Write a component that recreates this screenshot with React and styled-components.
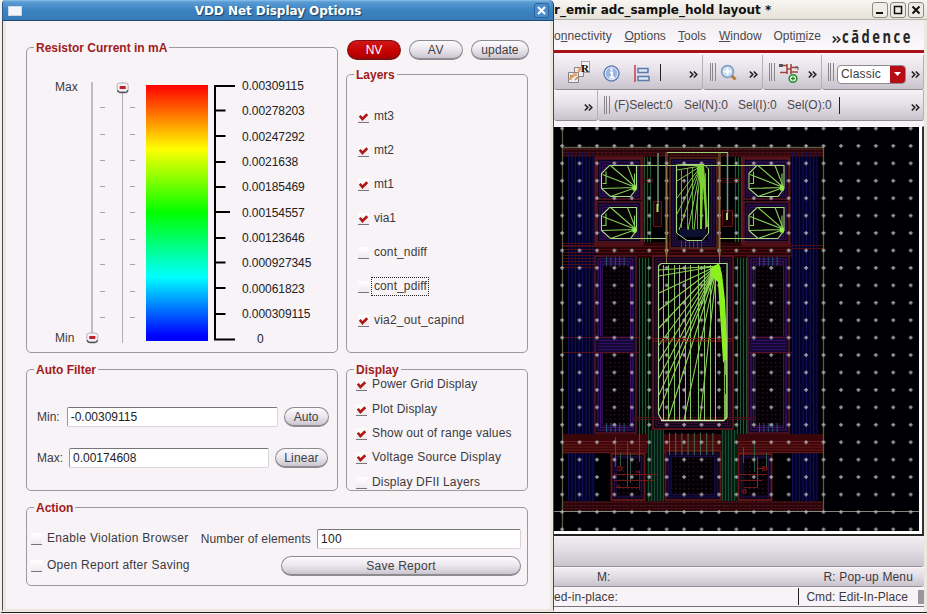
import React from "react";
import styled, { createGlobalStyle } from "styled-components";

const Global = createGlobalStyle`
  * { box-sizing: border-box; }
  html, body { margin: 0; padding: 0; background: #fff; }
  body { width: 927px; height: 614px; overflow: hidden; font: 12px/14px "Liberation Sans", Arial, sans-serif; color: #333; }
  svg { display: block; flex: none; }
`;

const Desktop = styled.div`
  display: flex;
  width: 927px;
  height: 614px;
  background: #f4f2f0;
  overflow: hidden;
`;

/* ---------- shared text ---------- */
const Text = styled.span`
  white-space: nowrap;
  flex: none;
  letter-spacing: ${(p) => p.$ls || 0}px;
  color: ${(p) => p.$color || "#3c3a3e"};
`;

/* ---------- dialog ---------- */
const Dialog = styled.div`
  flex: none;
  width: 554px;
  height: 613px;
  display: flex;
  flex-direction: column;
  border-left: 2px solid #f3f1ee;
  border-bottom: 1px solid #222;
`;

const DialogTitle = styled.div`
  flex: none;
  height: 21px;
  display: flex;
  align-items: center;
  justify-content: space-between;
  padding: 1px 4px 0 5px;
  border-bottom: 1px solid #1c4a78;
  border-right: 1px solid #1f3a5c;
  border-left: 1px solid #2b5b8c;
  border-radius: 4px 5px 0 0;
  background: linear-gradient(#8ac0ea 0, #5b9bd3 2px, #3c83c2 10px, #3a7cb8 18px);
  color: #fff;
  font: bold 12px/18px "DejaVu Sans", sans-serif;
  letter-spacing: -0.05px;
  text-shadow: 1px 1px 1px #1d3f63;
`;

const WindowGlyph = styled.span`
  width: 14px;
  height: 10px;
  background: #f5f5fa;
  border: 1px solid #c8d8ea;
`;

const CloseBox = styled.span`
  width: 15px;
  height: 15px;
  border: 1px solid #2a629b;
  border-radius: 3px;
  background: #4a8dcc;
  display: grid;
  place-items: center;
`;

const DialogBody = styled.div`
  flex: 1;
  display: flex;
  flex-direction: column;
  gap: 16px;
  padding: 19px 22px 0 23px;
  background: #f7f3f7;
  border-left: 1px solid #4a4844;
  border-right: 1px solid #4a4844;
  border-bottom: 3px solid #ece8e0;
  box-shadow: inset 3px 0 0 #ece8e0, inset -3px 0 0 #ece8e0;
`;

const Columns = styled.div`
  display: flex;
  gap: 8px;
  height: ${(p) => p.$h}px;
  align-items: flex-end;
`;

const Group = styled.section`
  flex: none;
  min-width: 0;
  width: ${(p) => p.$w}px;
  height: ${(p) => p.$h}px;
  border: 1px solid #9c999d;
  border-radius: 5px;
`;

const GroupTitle = styled.div`
  width: max-content;
  height: 14px;
  margin: -7px 0 0 7px;
  padding: 0 2px;
  background: #f7f3f7;
  color: #a01c20;
  font-weight: bold;
`;

const RightColumn = styled.div`
  display: flex;
  flex-direction: column;
  gap: 14px;
`;

const ButtonRow = styled.div`
  display: flex;
  gap: 8px;
  padding-left: 1px;
`;

const Button = styled.button`
  flex: none;
  width: ${(p) => p.$w}px;
  height: 20px;
  padding: 2px 0 1px;
  border-radius: 10px;
  border: 1px solid ${(p) => (p.$on ? "#7c1010" : "#8d8a90")};
  border-bottom-width: 2px;
  background: ${(p) => (p.$on ? "linear-gradient(#d01818, #c60000 60%, #b00000)" : "linear-gradient(#fdfbfe 0, #ebe6ed 50%, #cbc5d0 100%)")};
  color: ${(p) => (p.$on ? "#fff" : "#403e42")};
  font: 12px/14px "Liberation Sans", Arial, sans-serif;
  letter-spacing: ${(p) => p.$ls || 0}px;
`;

/* ---------- resistor current panel ---------- */
const ScaleRow = styled.div`
  display: flex;
  margin-top: 23px;
  height: 266px;
`;

const EndLabels = styled.div`
  width: 56px;
  height: 267px;
  padding: 2px 0 0 28px;
  display: flex;
  flex-direction: column;
  justify-content: space-between;
`;

const Spectrum = styled.div`
  width: 62px;
  height: 256px;
  margin: 7px 6px 0 6px;
  background: linear-gradient(#f00 0, #ff0 25%, #0f0 50%, #0ff 75%, #00f 98%);
`;

const Values = styled.div`
  display: flex;
  flex-direction: column;
  margin: 1px 0 0 7px;
`;

const Value = styled.div`
  flex: none;
  height: 25.35px;
  line-height: 15px;
  color: #222;
  letter-spacing: -0.07px;
  padding-left: ${(p) => (p.$zero ? 15 : 0)}px;
`;

/* ---------- checks ---------- */
const CheckList = styled.div`
  display: flex;
  flex-direction: column;
  padding: ${(p) => p.$pad};
  margin-top: ${(p) => p.$mt || 0}px;
`;

const CheckRow = styled.label`
  display: flex;
  flex: none;
  align-items: center;
  gap: ${(p) => (p.$focus ? 2 : 5)}px;
  height: ${(p) => p.$h}px;
`;

const FocusFrame = styled.span`
  border: 1px dotted #222;
  padding: 1px 1px 2px 2px;
  height: 19px;
`;

const Box = styled.span`
  flex: none;
  width: 11px;
  height: 12px;
  margin-top: 2px;
  background: linear-gradient(#fff, #eeeaf0);
  border-bottom: 1px solid #77747a;
`;

function Check({ on, label, ls, h, focus }) {
  const text = <Text $ls={ls}>{label}</Text>;
  return (
    <CheckRow $h={h} $focus={focus}>
      <Box>
        {on && (
          <svg width="11" height="11" viewBox="0 0 11 11">
            <path d="M1.800 4.800 L4.400 8 L9.300 3.200" fill="none" stroke="#b01818" strokeWidth="2.600" />
          </svg>
        )}
      </Box>
      {focus ? <FocusFrame>{text}</FocusFrame> : text}
    </CheckRow>
  );
}

/* ---------- fields ---------- */
const FieldRow = styled.div`
  display: flex;
  align-items: center;
  height: 20px;
  margin: ${(p) => p.$m};
`;

const Input = styled.div`
  flex: none;
  width: ${(p) => p.$w}px;
  height: 20px;
  margin: 0 ${(p) => p.$mr || 0}px 0 ${(p) => p.$ml || 0}px;
  padding: 2px 3px;
  background: #fff;
  border: 1px solid #d8d4da;
  border-top-color: #77747a;
  border-left-color: #9a979c;
  border-radius: 2px;
  color: #222;
  letter-spacing: ${(p) => p.$ls || 0}px;
`;

const ActionColumns = styled.div`
  display: flex;
  justify-content: space-between;
  padding: 13px 6px 0 4px;
`;

const ActionRight = styled.div`
  display: flex;
  flex-direction: column;
  align-items: flex-end;
  gap: 7px;
  padding-top: 1px;
`;

const Line = styled.div`
  display: flex;
  align-items: center;
`;

/* ---------- layout window ---------- */
const Main = styled.div`
  flex: none;
  width: 373px;
  height: 613px;
  display: flex;
  flex-direction: column;
  background: #ece8e0;
  border-bottom: 1px solid #222;
`;

const MainTitle = styled.div`
  flex: none;
  height: 20px;
  display: flex;
  align-items: center;
  justify-content: space-between;
  padding: 0 3px 0 0;
  background: linear-gradient(#f8f6f2, #e6e1d8);
  border-bottom: 1px solid #b8b4aa;
  color: #111;
  font: bold 12px/18px "DejaVu Sans", sans-serif;
  letter-spacing: -0.01px;
  white-space: nowrap;
`;

const WindowButtons = styled.div`
  display: flex;
  gap: 2px;
`;

const WindowButton = styled.span`
  width: 16px;
  height: 16px;
  border: 1px solid #8d897f;
  border-radius: 3px;
  background: #efece5;
  display: grid;
  place-items: center;
`;

const Content = styled.div`
  width: 370px;
  flex: 1;
  display: flex;
  flex-direction: column;
  background: #f7f3f7;
`;

const MenuBar = styled.div`
  height: 30px;
  display: flex;
  align-items: center;
  padding-top: 1px;
  background: linear-gradient(#f1edf1, #fbf9fb);
  white-space: nowrap;
`;

const MenuItem = styled.span`
  width: ${(p) => p.$w}px;
  flex: none;
  letter-spacing: ${(p) => p.$ls || 0}px;
  color: #4a484c;
`;

const MenuMore = styled.span`
  flex: none;
  padding-top: 8px;
  margin-left: -1px;
`;

const Brand = styled.span`
  font: bold 17px/18px "Open Sans", "Noto Sans", sans-serif;
  letter-spacing: 3.3px;
  color: #262626;
  padding-top: 3px;
  margin-left: 1px;
  width: 74px;
  transform: scaleX(0.765);
  transform-origin: left;
`;

const RedRule = styled.div`
  height: 3px;
  flex: none;
  background: #a81218;
  margin-bottom: 2px;
`;

const ToolRow = styled.div`
  display: flex;
  flex: none;
  height: ${(p) => p.$h}px;
`;

const ToolSegment = styled.div`
  flex: none;
  width: ${(p) => p.$w}px;
  display: flex;
  align-items: center;
  padding: ${(p) => p.$pad || "0"};
  background: linear-gradient(#f6f2f7 0, #e7e2e9 45%, #c8c3cc 100%);
  border-bottom: 1px solid #8f8b93;
  border-right: 1px solid #b5b0b8;
  border-radius: 0 0 3px 3px;
`;

const Grip = styled.span`
  flex: none;
  width: 6px;
  height: 18px;
  border-left: 1px solid #8a868e;
  border-right: 1px solid #8a868e;
  background: linear-gradient(90deg, transparent 1px, #8a868e 1px, #8a868e 2px, transparent 2px);
  margin-right: ${(p) => p.$mr || 0}px;
`;

const Bar = styled.span`
  flex: none;
  width: 1px;
  height: 17px;
  background: #222;
  margin-left: ${(p) => p.$ml || 0}px;
`;

const Push = styled.span`
  flex: 1;
`;

const Spacer = styled.span`
  flex: none;
  width: ${(p) => p.$w}px;
`;

const Select = styled.div`
  flex: none;
  width: 69px;
  height: 19px;
  display: flex;
  align-items: center;
  justify-content: space-between;
  padding-left: 3px;
  margin-top: 4px;
  border: 1px solid #8d8a90;
  border-radius: 4px;
  background: #fff;
  overflow: hidden;
`;

const SelectArrow = styled.span`
  width: 15px;
  height: 18px;
  background: #b80c14;
  display: grid;
  place-items: center;
`;

const MoreBox = styled.span`
  flex: none;
  padding-top: 4px;
`;

const CanvasFrame = styled.div`
  flex: none;
  margin-top: 5px;
  width: 370px;
  height: 410px;
  background: #fff;
  border-right: 2px solid #333;
  border-bottom: 2px solid #222;
  border-top: 1px solid #fff;
`;

const PromptPanel = styled.div`
  flex: none;
  height: ${(p) => p.$h}px;
  display: flex;
  align-items: center;
  justify-content: space-between;
  padding: 0 11px 0 43px;
  margin-top: 1px;
  background: linear-gradient(#f1edf2, #e3dee5 45%, #c9c4cc);
  border-bottom: 1px solid #96929a;
  border-radius: 0 0 3px 0;
`;

const StatusBar = styled.div`
  flex: none;
  height: 20px;
  display: flex;
  align-items: center;
  border-bottom: 1px solid #77747a;
`;

const SizeGrip = styled.span`
  width: 6px;
  height: 14px;
  background: #9a979c;
  margin-left: 10px;
`;

const More = () => (
  <MoreBox>
    <svg width="9" height="9" viewBox="0 0 9 9">
      <path d="M.8 1.500 L3.800 4.500 L.8 7.500 M4.800 1.500 L7.800 4.500 L4.800 7.500" fill="none" stroke="#222" strokeWidth="1.600" />
    </svg>
  </MoreBox>
);

/* ---------- sliders and tick scale ---------- */
const Handle = ({ x, y }) => (
  <g transform={`translate(${x} ${y})`}>
    <rect x="-5.5" y="0" width="11" height="9" rx="2.5" fill="#f3eff4" stroke="#b5b1b7" />
    <path d="M-5 7 Q-5 9.5 -2 9.5 H2 Q5 9.5 5 7" fill="none" stroke="#55525a" strokeWidth="1.3" />
    <rect x="-3" y="3" width="6" height="3" fill="#c02028" />
  </g>
);

const tickYs = [107.5, 134.5, 160.5, 186.5, 212.5, 239.5, 264.5, 291.5, 317.5];
function Sliders() {
  return (
    <svg width="57" height="266" viewBox="83 78 57 266">
      <path d="M92 82V334" stroke="#c0bcc2" strokeWidth="2" />
      <path d="M122.5 82V343" stroke="#b0acb2" />
      <path d={tickYs.map((y) => `M100 ${y}h5M130 ${y}h5`).join("")} stroke="#a5a2a8" />
      <Handle x={92.3} y={333} />
      <Handle x={122.7} y={83} />
    </svg>
  );
}

function Axis() {
  const ticks = [110.5, 136, 162, 187, 238, 262.5, 288, 314];
  return (
    <svg width="21" height="266" viewBox="213 78 21 266">
      <path d="M234 86H214V339.500H234M214 212H229" fill="none" stroke="#000" strokeWidth="2" />
      <path d={ticks.map((y) => `M214 ${y}h10.5`).join("")} stroke="#000" strokeWidth="1.8" />
    </svg>
  );
}

const values = ["0.00309115", "0.00278203", "0.00247292", "0.0021638", "0.00185469", "0.00154557", "0.00123646", "0.000927345", "0.00061823", "0.000309115", "0"];

/* ---------- chip layout drawing ---------- */
const vlines = (x1, x2, step, y1, y2) => {
  let d = "";
  for (let x = x1; x <= x2; x += step) d += `M${x} ${y1}V${y2}`;
  return d;
};
const hlines = (y1, y2, step, x1, x2) => {
  let d = "";
  for (let y = y1; y <= y2; y += step) d += `M${x1} ${y}H${x2}`;
  return d;
};
const fan = (cx, cy, pts) => pts.map(([x, y]) => `M${cx} ${cy}L${x} ${y}`).join("");

const Ring = ({ x, y, w, h, c = "#34105f", o = "#4c1226" }) => (
  <g fill="none">
    <rect x={x} y={y} width={w} height={h} stroke={o} strokeWidth="1.8" fill="#0c0418" />
    {[3, 5.5, 8].map((i) => (
      <rect key={i} x={x + i} y={y + i} width={w - 2 * i} height={h - 2 * i} stroke={c} strokeWidth="1.3" />
    ))}
  </g>
);

const Dots = ({ x, y, w, h }) => (
  <g>
    <rect x={x} y={y} width={w} height={h} fill="#030005" />
    <rect x={x} y={y} width={w} height={h} fill="url(#dots)" />
  </g>
);

const Octagon = ({ x, y }) => (
  <g transform={`translate(${x} ${y})`} fill="none" stroke="#86cf5c" strokeWidth="1.1">
    <path d="M0 8 L8 0 H35 V23 L29 31 H9 L0 23Z" stroke="#a9dd84" fill="#050303" />
    <path d={fan(34.5, 22, [[0, 23], [1, 9], [9, 0], [26, 0], [9, 31]])} />
    <path d="M33 8V24M4.500 6V18H1" />
    <path d="M31 20l4 1v4h-4z" fill="#94ec4a" stroke="none" />
  </g>
);

const bigFan = [[659, 270], [659, 276], [659, 293], [659, 310], [659, 328], [659, 345], [659, 361], [659, 378], [659, 395], [659, 411], [668, 420], [684, 420], [700, 420]];
const bigGreen = [663.5, 668.5, 674.5, 679.5, 685.5, 690.5, 698.5, 704.5, 710.5, 715.5];

function ChipLayout() {
  return (
    <svg width="365" height="404" viewBox="554 127 365 404">
      <defs>
        <pattern id="dots" width="4.35" height="4.35" patternUnits="userSpaceOnUse">
          <rect x="1" y="1" width="1" height="1" fill="#5b2036" />
        </pattern>
        <pattern id="plus" x="553.3" y="119.8" width="17.43" height="17.43" patternUnits="userSpaceOnUse">
          <path d="M6.800 8.700h4M8.800 6.700v4" stroke="#b4b4b8" strokeWidth="1.200" />
        </pattern>
      </defs>
      <rect x="554" y="127" width="365" height="404" fill="#000004" />

      <rect x="562" y="148" width="262" height="9" fill="#280508" />
      <path d={hlines(149.5, 157, 3, 562, 824)} stroke="#480d14" />
      <rect x="562" y="148" width="262" height="9" fill="url(#dots)" />
      <rect x="568" y="157" width="27" height="344" fill="#020226" />
      <path d={vlines(568.5, 595, 3.5, 152, 501)} stroke="#111158" />
      <rect x="792" y="157" width="25" height="344" fill="#020226" />
      <path d={vlines(792.5, 817, 3.5, 152, 501)} stroke="#111158" />

      <rect x="637" y="157" width="15" height="344" fill="#010a05" />
      <rect x="734" y="157" width="14" height="344" fill="#010a05" />
      <path d={vlines(639.5, 651, 3, 252, 436) + vlines(737.5, 747, 3, 252, 436)} stroke="#1f5636" />
      <path d={vlines(644.5, 651, 3, 157, 252) + vlines(735.5, 742, 3, 157, 252)} stroke="#1f5636" />

      <rect x="596" y="242" width="196" height="16" fill="#280407" />
      <path d={hlines(246.5, 257, 3, 596, 792)} stroke="#4f0d12" />
      <path d="M562 245.500H596M792 245.500H824M792 248.500H824" stroke="#4f0d12" />
      <path d={hlines(243.5, 269, 3, 562, 596)} stroke="#4f0d12" />

      <Ring x={597} y={159} w={44} h={40} />
      <Ring x={597} y={202} w={44} h={40} />
      <Ring x={744} y={159} w={45} h={40} />
      <Ring x={744} y={202} w={45} h={40} />
      <rect x="595.5" y="157.5" width="47" height="87" fill="none" stroke="#5c141a" strokeWidth="2" />
      <rect x="742.5" y="157.5" width="47" height="87" fill="none" stroke="#5c141a" strokeWidth="2" />
      <Ring x={670} y={158} w={47} h={90} c="#26104f" o="#54201b" />
      <Dots x={678} y={166} w={30} h={74} />
      <path d="M653.500 201.500h8v25h-8zM722.500 210.500h10v16h-10z" fill="#180307" stroke="#661317" />
      <path d={hlines(178.5, 184, 2, 642, 653) + hlines(178.5, 184, 2, 721, 742)} stroke="#400c12" />
      <path d="M666.500 152V263M719.500 152V263" stroke="#553a20" strokeWidth="3" />
      <path d={vlines(681.5, 702, 4, 241, 249)} stroke="#28504e" />

      {[595, 748].map((x) => (
        <g key={x}>
          <Ring x={x} y={256} w={41} h={177} c="#3c136c" />
          <rect x={x + 1} y="336" width="39" height="17" fill="#170735" />
          <path d={hlines(340.5, 352, 3, x + 3, x + 38)} stroke="#2c1065" />
          <Dots x={x + 8} y={266} w={27} h={70} />
          <Dots x={x + 8} y={353} w={27} h={72} />
          <path d={vlines(x + 11.5, x + 33, 4.4, 257, 266) + vlines(x + 11.5, x + 33, 4.4, 423, 432)} stroke="#2a4f66" />
          <path d={`M${x} 337.5h44M${x} 352.5h44`} stroke="#5c1023" />
        </g>
      ))}
      <path d="M562 337.500H596M562 352.500H596" stroke="#57101a" />

      <Ring x={653} y={256} w={80} h={173} c="#35102e" o="#60151d" />
      <Dots x={659} y={264} w={68} h={156} />
      <path d={hlines(338.5, 343, 2.5, 652, 734)} stroke="#7c1517" />

      <rect x="562" y="434" width="262" height="19" fill="#3a0609" />
      <path d={hlines(441.5, 453, 2.8, 562, 824)} stroke="#681a1a" />
      <path d={hlines(417.5, 420, 2, 634, 755)} stroke="#4c1018" />
      <rect x="647" y="430" width="17" height="72" fill="#041d12" />
      <rect x="721" y="430" width="16" height="72" fill="#041d12" />
      <path d={vlines(648.5, 664, 3, 430, 502) + vlines(722.5, 737, 3, 430, 502)} stroke="#174c32" />
      <Ring x={611.5} y={454} w={33} h={46} c="#200d42" o="#661817" />
      <Ring x={738.5} y={454} w={33} h={46} c="#200d42" o="#661817" />
      <Ring x={665.5} y={451} w={55} h={49} c="#180d48" o="#5b1515" />
      <Dots x={672} y={457} w={42} h={37} />
      <Dots x={617} y={459} w={23} h={36} />
      <Dots x={744} y={459} w={23} h={36} />
      <path d={vlines(669.5, 718, 6.2, 433, 455)} stroke="#4a6a4c" />
      <path d="M615.500 437v30M627.500 442v45M630.500 453v30M639.500 430v32M620.500 453v13M743.500 447v16M754.500 442v30M757.500 457v30M766.500 453v14" stroke="#2c5945" />
      <path d="M614 474.500h43M614 480.500h40M616 487.500h23M739 474.500h28M740 480.500h22M744 487.500h14M639.500 470v20M765 468.500h-9" stroke="#701a18" fill="none" />
      <path d="M617 467h5v3h-5M617 486h3M635 472h4M762 467h5v3h-5M743 490h3v3h-3z" stroke="#971818" fill="none" />
      <rect x="562" y="501" width="262" height="10" fill="#280509" />
      <path d={hlines(502.5, 510, 3, 562, 824)} stroke="#420c12" />
      <rect x="562" y="501" width="262" height="10" fill="url(#dots)" />

      <path d="M562.500 127V531M562 147.500H823.500V511" fill="none" stroke="#5f5a43" strokeWidth="1.300" />
      <path d="M554 511.500H919" stroke="#84857c" />
      <rect x="554" y="127" width="365" height="404" fill="url(#plus)" />

      <path d="M610 165.500H784M610 238.500H666M720 238.500H776M667 152.500H728" stroke="#a2cc72" />
      <path d="M658 153V206M727.500 153V213" stroke="#6d9970" strokeWidth="1.500" />
      <path d="M657.500 204V212M727 213V220" stroke="#b6de63" strokeWidth="2" />
      <path d="M666.500 165V263M719.500 165V263" stroke="#8a7040" />
      <Octagon x={601.5} y={165.5} />
      <Octagon x={601.5} y={207.5} />
      <Octagon x={749} y={165.5} />
      <Octagon x={749} y={207.5} />

      <rect x="680" y="229" width="26" height="8" fill="#0c1030" />
      <path d="M676.500 165 L684 164.500 H704 L708.500 169 V233 L702 240.500 H687 L676.500 233Z" fill="none" stroke="#a0d97c" />
      <path d="M681.500 170V228M687.500 168V229M692.500 168V229M697.500 190V229M705.500 173V229" stroke="#62a34c" />
      <path d={fan(701, 166, [[677, 170], [677, 181], [677, 198], [677, 214], [679, 230], [688, 230], [694, 230]])} stroke="#80cf46" fill="none" />
      <path d="M697 165h7l2 26 2 36h-2l-3-40-1 42h-2l0-48-3-10z" fill="#7bd233" />

      <path d={bigGreen.map((x) => `M${x} 265V420`).join("")} stroke="#86c468" />
      <path d={fan(717, 266, bigFan)} stroke="#8fd455" strokeWidth="1.1" />
      <path d="M711 268L719 263L722 274L725 300L727 340V362H723L718 282L711 276Z" fill="#8bf11c" />
      <path d="M725.500 360V419" stroke="#75b83c" strokeWidth="3" />
      <path d="M725.500 375V394" stroke="#122008" />
      <path d="M658.500 266 L661 263.500 H727 V417 L724 420.500 H662 L658.500 414Z" fill="none" stroke="#aed690" strokeWidth="1.200" />
      <path d="M661 420.500H724" stroke="#d7efac" strokeWidth="1.500" />
      <path d={hlines(338.5, 343, 2.5, 661, 722)} stroke="#8c1714" strokeDasharray="5 2" />
    </svg>
  );
}

/* ---------- toolbar icons ---------- */
const CopyIcon = () => (
  <svg width="25" height="24" viewBox="0 0 25 24">
    <rect x="14.500" y="1.500" width="8" height="11" fill="#f5f3f6" stroke="#a5a1aa" />
    <path d="M7.500 7.500h9v9h-9z" fill="#f2ede8" stroke="#85818a" />
    <path d="M1.500 12.500h10v10h-10z" fill="#f2ede8" stroke="#85818a" />
    <path d="M3 20c0-3 2-3 4-5l3-1M12 12c0-3 1-4 4-4" fill="none" stroke="#e2a570" strokeWidth="3" />
    <path d="M3 15l2 2M8 20l3-3" stroke="#b98559" strokeWidth="1.500" />
    <text x="14" y="11.500" fontFamily="Liberation Serif" fontWeight="bold" fontSize="11" fill="#111">R</text>
  </svg>
);

const InfoIcon = () => (
  <svg width="17" height="19" viewBox="0 -2 17 19">
    <circle cx="8.500" cy="8.500" r="7.700" fill="#6b8bc9" stroke="#5771ab" />
    <circle cx="8.500" cy="8.500" r="6.300" fill="#9db5e5" stroke="#edf2fc" />
    <path d="M7 7.500h2v5M6.500 12.500h5" stroke="#fff" strokeWidth="1.800" fill="none" />
    <circle cx="8.500" cy="4.500" r="1.200" fill="#fff" />
  </svg>
);

const AlignIcon = () => (
  <svg width="17" height="22" viewBox="0 -4 17 22">
    <path d="M1 0V17" stroke="#c23d48" strokeWidth="1.500" />
    <path d="M4 3.500h10v4H4zM4 11.500h11v4H4z" fill="#dce6f5" stroke="#5c78ae" strokeWidth="1.500" />
  </svg>
);

const ZoomIcon = () => (
  <svg width="18" height="20" viewBox="0 -2 18 20">
    <path d="M10.500 10.500L15.500 15.500" stroke="#b77830" strokeWidth="3" />
    <circle cx="7.500" cy="7.500" r="6" fill="#c3e0f7" stroke="#7f98b8" strokeWidth="1.500" />
    <path d="M4 7.500h7M7.500 4v7" stroke="#fff" strokeWidth="2" />
  </svg>
);

const NetIcon = () => (
  <svg width="21" height="23" viewBox="0 -2 21 23">
    <path d="M1 2.500H9M2 9.500H9M9 1V11M13 1V11M9 6H13M13 4.500H20M13 9H20" fill="none" stroke="#a5453c" strokeWidth="1.600" />
    <rect x="1" y="1" width="4" height="3" fill="#55525a" />
    <path d="M17 4h3v3" fill="none" stroke="#55525a" />
    <circle cx="15" cy="15.500" r="3.800" fill="#f0fff0" stroke="#238b2d" strokeWidth="1.600" />
    <path d="M15 13.500v4M13 15.500h4" stroke="#238b2d" strokeWidth="1.400" />
  </svg>
);

const layers = [["mt3", true], ["mt2", true], ["mt1", true], ["via1", true], ["cont_ndiff", false, 0.1], ["cont_pdiff", false, 0.1, true], ["via2_out_capind", true, 0.2]];
const display = [["Power Grid Display", true, 0.15], ["Plot Display", true, 0.15], ["Show out of range values", true, 0.18], ["Voltage Source Display", true, 0.23], ["Display DFII Layers", false, 0.18]];

function OptionsDialog() {
  return (
    <Dialog>
      <DialogTitle>
        <WindowGlyph />
        <span>VDD Net Display Options</span>
        <CloseBox>
          <svg width="9" height="9" viewBox="0 0 9 9"><path d="M1 1L8 8M8 1L1 8" stroke="#fff" strokeWidth="2" /></svg>
        </CloseBox>
      </DialogTitle>
      <DialogBody>
        <Columns $h={313}>
          <Group $w={312} $h={306}>
            <GroupTitle>Resistor Current in mA</GroupTitle>
            <ScaleRow>
              <EndLabels>
                <Text>Max</Text>
                <Text>Min</Text>
              </EndLabels>
              <Sliders />
              <Spectrum />
              <Axis />
              <Values>
                {values.map((v) => <Value key={v} $zero={v === "0"}>{v}</Value>)}
              </Values>
            </ScaleRow>
          </Group>
          <RightColumn>
            <ButtonRow>
              <Button $w={54} $on>NV</Button>
              <Button $w={54} $ls={0.8}>AV</Button>
              <Button $w={58} $ls={0.1}>update</Button>
            </ButtonRow>
            <Group $w={182} $h={279}>
              <GroupTitle>Layers</GroupTitle>
              <CheckList $pad="17px 0 0 11px">
                {layers.map(([label, on, ls, focus]) => (
                  <Check key={label} label={label} on={on} ls={ls} focus={focus} h={34} />
                ))}
              </CheckList>
            </Group>
          </RightColumn>
        </Columns>
        <Columns $h={122}>
          <Group $w={312} $h={122}>
            <GroupTitle>Auto Filter</GroupTitle>
            <FieldRow $m="30px 0 0 10px">
              <Text>Min:</Text>
              <Input $w={211} $ml={7} $mr={6}>-0.00309115</Input>
              <Button $w={45}>Auto</Button>
            </FieldRow>
            <FieldRow $m="21px 0 0 10px">
              <Text>Max:</Text>
              <Input $w={200} $ml={6} $mr={6}>0.00174608</Input>
              <Button $w={53} $ls={0.2}>Linear</Button>
            </FieldRow>
          </Group>
          <Group $w={182} $h={122}>
            <GroupTitle>Display</GroupTitle>
            <CheckList $pad="0 0 0 9px" $mt={-5}>
              {display.map(([label, on, ls]) => <Check key={label} label={label} on={on} ls={ls} h={24.4} />)}
            </CheckList>
          </Group>
        </Columns>
        <Group $w={502} $h={79}>
          <GroupTitle>Action</GroupTitle>
          <ActionColumns>
            <div>
              <Check label="Enable Violation Browser" ls={0.32} h={20} />
              <Check label="Open Report after Saving" ls={0.28} h={34} />
            </div>
            <ActionRight>
              <Line>
                <Text $ls={0.12}>Number of elements</Text>
                <Input $w={204} $ml={6} $ls={0.3}>100</Input>
              </Line>
              <Button $w={240} $ls={0.25}>Save Report</Button>
            </ActionRight>
          </ActionColumns>
        </Group>
      </DialogBody>
    </Dialog>
  );
}

function LayoutWindow() {
  return (
    <Main>
      <MainTitle>
        <span>r_emir adc_sample_hold layout *</span>
        <WindowButtons>
          <WindowButton><svg width="10" height="10"><path d="M1 8h7" stroke="#111" strokeWidth="2" /></svg></WindowButton>
          <WindowButton><svg width="10" height="10"><rect x="1.500" y="1.500" width="7" height="7" fill="none" stroke="#111" strokeWidth="1.500" /></svg></WindowButton>
          <WindowButton><svg width="10" height="10"><path d="M1.500 1.500L8.500 8.500M8.500 1.500L1.500 8.500" stroke="#111" strokeWidth="2" /></svg></WindowButton>
        </WindowButtons>
      </MainTitle>
      <Content>
        <MenuBar>
          <MenuItem $w={70.5} $ls={0.1}>o<u>n</u>nectivity</MenuItem>
          <MenuItem $w={53.5}><u>O</u>ptions</MenuItem>
          <MenuItem $w={41}><u>T</u>ools</MenuItem>
          <MenuItem $w={54.5}><u>W</u>indow</MenuItem>
          <MenuItem $w={59}>Opti<u>m</u>ize</MenuItem>
          <MenuMore><More /></MenuMore>
          <Brand>cādence</Brand>
        </MenuBar>
        <RedRule />
        <ToolRow $h={35}>
          <ToolSegment $w={149} $pad="0 4px 0 13px">
            <CopyIcon /><Spacer $w={11} /><InfoIcon /><Spacer $w={14} /><AlignIcon />
            <Bar $ml={9} /><Push /><More />
          </ToolSegment>
          <ToolSegment $w={60} $pad="0 4px 0 7px"><Grip $mr={4} /><ZoomIcon /><Push /><More /></ToolSegment>
          <ToolSegment $w={59} $pad="0 4px 0 6px"><Grip $mr={3} /><NetIcon /><Push /><More /></ToolSegment>
          <ToolSegment $w={102} $pad="0 3px 0 6px">
            <Grip $mr={3} />
            <Select>
              <Text $ls={0.2}>Classic</Text>
              <SelectArrow><svg width="7" height="4"><path d="M0 0h7L3.500 4z" fill="#fff" /></svg></SelectArrow>
            </Select>
            <Push /><More />
          </ToolSegment>
        </ToolRow>
        <ToolRow $h={31}>
          <ToolSegment $w={44} $pad="0 4px 0 0"><Push /><More /></ToolSegment>
          <ToolSegment $w={326} $pad="0 3px 0 6px">
            <Grip $mr={4} />
            <MenuItem $w={70}>(F)Select:0</MenuItem>
            <MenuItem $w={54}>Sel(N):0</MenuItem>
            <MenuItem $w={49}>Sel(I):0</MenuItem>
            <MenuItem $w={52}>Sel(O):0</MenuItem>
            <Bar /><Push /><More />
          </ToolSegment>
        </ToolRow>
        <CanvasFrame><ChipLayout /></CanvasFrame>
        <PromptPanel $h={30} />
        <PromptPanel $h={19}>
          <Text>M:</Text>
          <Text $ls={0.15}>R: Pop-up Menu</Text>
        </PromptPanel>
        <StatusBar>
          <Text $ls={0.1}>ed-in-place:</Text>
          <Push />
          <Bar />
          <Spacer $w={7} />
          <Text $ls={0.05}>Cmd: Edit-In-Place</Text>
          <SizeGrip />
        </StatusBar>
      </Content>
    </Main>
  );
}

export default function App() {
  return (
    <>
      <Global />
      <Desktop>
        <OptionsDialog />
        <LayoutWindow />
      </Desktop>
    </>
  );
}
